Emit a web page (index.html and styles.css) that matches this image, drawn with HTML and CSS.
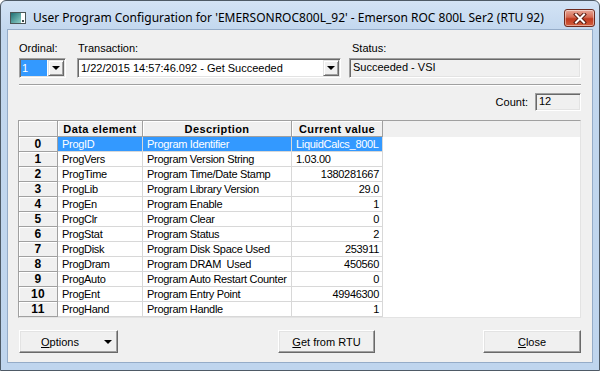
FILE: index.html
```html
<!DOCTYPE html>
<html lang="en">
<head>
    <meta charset="UTF-8">
    <title>User Program Configuration</title>
    <link rel="stylesheet" href="styles.css">
</head>
<body>
    <div class="window">
        <div class="titlebar">
            <svg class="app-icon" width="16" height="12" viewBox="0 0 16 12">
                <defs>
                    <linearGradient id="ig" x1="0" y1="0" x2="1" y2="1">
                        <stop offset="0" stop-color="#1f6f74"/>
                        <stop offset="1" stop-color="#8fd0c8"/>
                    </linearGradient>
                </defs>
                <rect x="0.5" y="0.5" width="15" height="11" fill="#fff" stroke="#4b5656"/>
                <rect x="1" y="1" width="10" height="10" fill="url(#ig)"/>
                <rect x="12" y="8" width="2" height="2" fill="#3a4a4a"/>
            </svg>
            <span class="title">User Program Configuration for 'EMERSONROC800L_92' - Emerson ROC 800L Ser2 (RTU 92)</span>
            <div class="close-x">
                <svg width="14" height="11" viewBox="0 0 14 11">
                    <path d="M3 1.5 L11 9.5 M11 1.5 L3 9.5" stroke="#5a1d12" stroke-width="4" stroke-linecap="square"/>
                    <path d="M3 1.5 L11 9.5 M11 1.5 L3 9.5" stroke="#fff" stroke-width="2" stroke-linecap="square"/>
                </svg>
            </div>
        </div>

        <div class="client">
            <div class="top-row">
                <div class="field f-ordinal">
                    <label>Ordinal:</label>
                    <div class="combo">
                        <span class="combo-text selected">1</span>
                        <span class="drop-btn"><i class="arrow"></i></span>
                    </div>
                </div>
                <div class="field f-transaction">
                    <label>Transaction:</label>
                    <div class="combo">
                        <span class="combo-text">1/22/2015 14:57:46.092 - Get Succeeded</span>
                        <span class="drop-btn"><i class="arrow"></i></span>
                    </div>
                </div>
                <div class="field f-status">
                    <label>Status:</label>
                    <div class="readonly">Succeeded - VSI</div>
                </div>
            </div>

            <div class="separator"></div>

            <div class="count-row">
                <span>Count:</span>
                <div class="readonly count-box">12</div>
            </div>

            <div class="grid">
                <table class="grid-table">
                    <colgroup>
                        <col style="width: 39px">
                        <col style="width: 85px">
                        <col style="width: 149px">
                        <col style="width: 91px">
                        <col>
                    </colgroup>
                    <thead>
                        <tr>
                            <th></th>
                            <th>Data element</th>
                            <th>Description</th>
                            <th>Current value</th>
                            <th class="fill"></th>
                        </tr>
                    </thead>
                    <tbody>
                        <tr class="selected-row"><th>0</th><td>ProgID</td><td>Program Identifier</td><td>LiquidCalcs_800L</td><td class="fill"></td></tr>
                        <tr><th>1</th><td>ProgVers</td><td>Program Version String</td><td>1.03.00</td><td class="fill"></td></tr>
                        <tr><th>2</th><td>ProgTime</td><td>Program Time/Date Stamp</td><td class="num">1380281667</td><td class="fill"></td></tr>
                        <tr><th>3</th><td>ProgLib</td><td>Program Library Version</td><td class="num">29.0</td><td class="fill"></td></tr>
                        <tr><th>4</th><td>ProgEn</td><td>Program Enable</td><td class="num">1</td><td class="fill"></td></tr>
                        <tr><th>5</th><td>ProgClr</td><td>Program Clear</td><td class="num">0</td><td class="fill"></td></tr>
                        <tr><th>6</th><td>ProgStat</td><td>Program Status</td><td class="num">2</td><td class="fill"></td></tr>
                        <tr><th>7</th><td>ProgDisk</td><td>Program Disk Space Used</td><td class="num">253911</td><td class="fill"></td></tr>
                        <tr><th>8</th><td>ProgDram</td><td>Program DRAM&nbsp; Used</td><td class="num">450560</td><td class="fill"></td></tr>
                        <tr><th>9</th><td>ProgAuto</td><td>Program Auto Restart Counter</td><td class="num">0</td><td class="fill"></td></tr>
                        <tr><th>10</th><td>ProgEnt</td><td>Program Entry Point</td><td class="num">49946300</td><td class="fill"></td></tr>
                        <tr><th>11</th><td>ProgHand</td><td>Program Handle</td><td class="num">1</td><td class="fill"></td></tr>
                    </tbody>
                </table>
            </div>

            <div class="buttons">
                <button class="btn btn-options"><span><u>O</u>ptions</span><i class="arrow"></i></button>
                <button class="btn btn-get"><u>G</u>et from RTU</button>
                <button class="btn btn-close"><u>C</u>lose</button>
            </div>
        </div>
    </div>
</body>
</html>
```

FILE: styles.css
```css
* {
    margin: 0;
    padding: 0;
    box-sizing: border-box;
}

body {
    width: 600px;
    height: 371px;
    overflow: hidden;
    background-color: #fff;
    font-family: 'Liberation Sans', Arial, sans-serif;
    font-size: 11px;
    color: #000;
}

.window {
    width: 600px;
    height: 371px;
    border: 1px solid #4e5a66;
    border-radius: 6px 6px 0 0;
    background: linear-gradient(#d3e3f5 0px, #c2d7ee 30px, #bfd5ee 100%);
    display: flex;
    flex-direction: column;
    padding: 0 6px 7px 6px;
}

/* title bar */
.titlebar {
    height: 28px;
    display: flex;
    align-items: center;
    position: relative;
}

.app-icon {
    margin-left: 3px;
    margin-top: 5px;
    flex-shrink: 0;
}

.title {
    margin-left: 7px;
    margin-top: 5px;
    font-family: 'Segoe UI', 'Noto Sans', sans-serif;
    font-size: 12px;
    white-space: nowrap;
    color: #000;
}

.close-x {
    position: absolute;
    right: -2px;
    top: 8px;
    width: 31px;
    height: 18px;
    border: 1px solid #6e2a1e;
    border-radius: 3px;
    background: linear-gradient(#e8a898 0%, #d46a53 45%, #c0391f 55%, #d2603f 100%);
    box-shadow: inset 0 0 0 1px rgba(255, 255, 255, 0.45);
    display: flex;
    justify-content: center;
    align-items: center;
}

/* client area */
.client {
    flex: 1;
    border: 1px solid #95acc8;
    background-color: #f0f0f0;
    padding: 11px 11px 9px 10px;
}

.top-row {
    display: flex;
    margin-left: 1px;
}

.field label {
    display: block;
    height: 14px;
    line-height: 14px;
    margin-bottom: 3px;
}

.f-ordinal { width: 47px; }
.f-transaction { width: 264px; margin-left: 11px; }
.f-transaction label { padding-left: 1px; }
.f-status { width: 232px; margin-left: 8px; }
.f-status label { padding-left: 3px; }

.combo {
    height: 20px;
    background-color: #fff;
    border: 1px solid;
    border-color: #a0a0a0 #fff #fff #a0a0a0;
    box-shadow: inset 1px 1px #696969, inset -1px -1px #e3e3e3;
    padding: 1px;
    display: flex;
}

.combo-text {
    flex: 1;
    line-height: 16px;
    padding-left: 2px;
    white-space: nowrap;
    overflow: hidden;
}

.combo-text.selected {
    flex: none;
    width: 26px;
    padding-left: 1px;
    background-color: #3399ff;
    color: #fff;
    margin-right: 1px;
}

.drop-btn {
    width: 16px;
    height: 16px;
    margin-left: auto;
    background-color: #f0f0f0;
    border: 1px solid;
    border-color: #e3e3e3 #696969 #696969 #e3e3e3;
    box-shadow: inset 1px 1px #fff, inset -1px -1px #a0a0a0;
    display: flex;
    justify-content: center;
    align-items: center;
}

.arrow {
    width: 0;
    height: 0;
    border-left: 4px solid transparent;
    border-right: 4px solid transparent;
    border-top: 4px solid #000;
}

.readonly {
    height: 20px;
    line-height: 17px;
    padding-left: 3px;
    background-color: #f0f0f0;
    border: 1px solid;
    border-color: #a0a0a0 #fff #fff #a0a0a0;
    box-shadow: inset 1px 1px #696969, inset -1px -1px #e3e3e3;
    white-space: nowrap;
}

.separator {
    margin: 6px 0 0 1px;
    height: 2px;
    border-top: 1px solid #a0a0a0;
    border-bottom: 1px solid #fff;
}

.count-row {
    margin-top: 7px;
    height: 18px;
    display: flex;
    justify-content: flex-end;
    align-items: center;
    gap: 7px;
}

.count-box {
    width: 46px;
    height: 18px;
    line-height: 15px;
}

/* data grid */
.grid {
    margin-top: 9px;
    background-color: #fff;
    border: 1px solid;
    border-color: #a0a0a0 #e3e3e3 #e3e3e3 #a0a0a0;
}

.grid-table {
    width: 100%;
    table-layout: fixed;
    border-collapse: separate;
    border-spacing: 0;
}

.grid-table th,
.grid-table td {
    height: 15px;
    padding: 0 4px;
    white-space: nowrap;
    overflow: hidden;
    line-height: 14px;
}

.grid-table th {
    background-color: #f0f0f0;
    font-weight: bold;
    text-align: center;
    letter-spacing: 0.4px;
    border-right: 1px solid #a0a0a0;
    border-bottom: 1px solid #a0a0a0;
    box-shadow: inset 1px 1px #fff;
}

.grid-table tbody th {
    font-size: 12px;
}

.grid-table thead th {
    height: 16px;
}

.grid-table td {
    letter-spacing: -0.3px;
    border-right: 1px solid #d8d8d8;
    border-bottom: 1px solid #d8d8d8;
}

.grid-table td.num {
    text-align: right;
    padding-right: 3px;
}

.grid-table th.fill {
    border-right: none;
    border-bottom: none;
    box-shadow: none;
}

.grid-table td.fill {
    border: none;
    background-color: #fff;
}

.selected-row td {
    background-color: #3399ff;
    color: #fff;
}

/* buttons */
.buttons {
    margin: 12px 0 0 1px;
    display: flex;
}

.btn {
    height: 23px;
    font-family: 'Liberation Sans', Arial, sans-serif;
    font-size: 11px;
    color: #000;
    background-color: #f0f0f0;
    border: 1px solid;
    border-color: #fff #696969 #696969 #fff;
    box-shadow: inset -1px -1px #a0a0a0, inset 1px 1px #e3e3e3;
    display: flex;
    align-items: center;
    justify-content: center;
}

.btn u {
    text-decoration: underline;
}

.btn-options {
    width: 99px;
    justify-content: flex-start;
    padding-left: 21px;
}

.btn-options .arrow {
    margin-left: 25px;
}

.btn-get {
    width: 97px;
    margin-left: 160px;
}

.btn-close {
    width: 98px;
    margin-left: auto;
}
```
